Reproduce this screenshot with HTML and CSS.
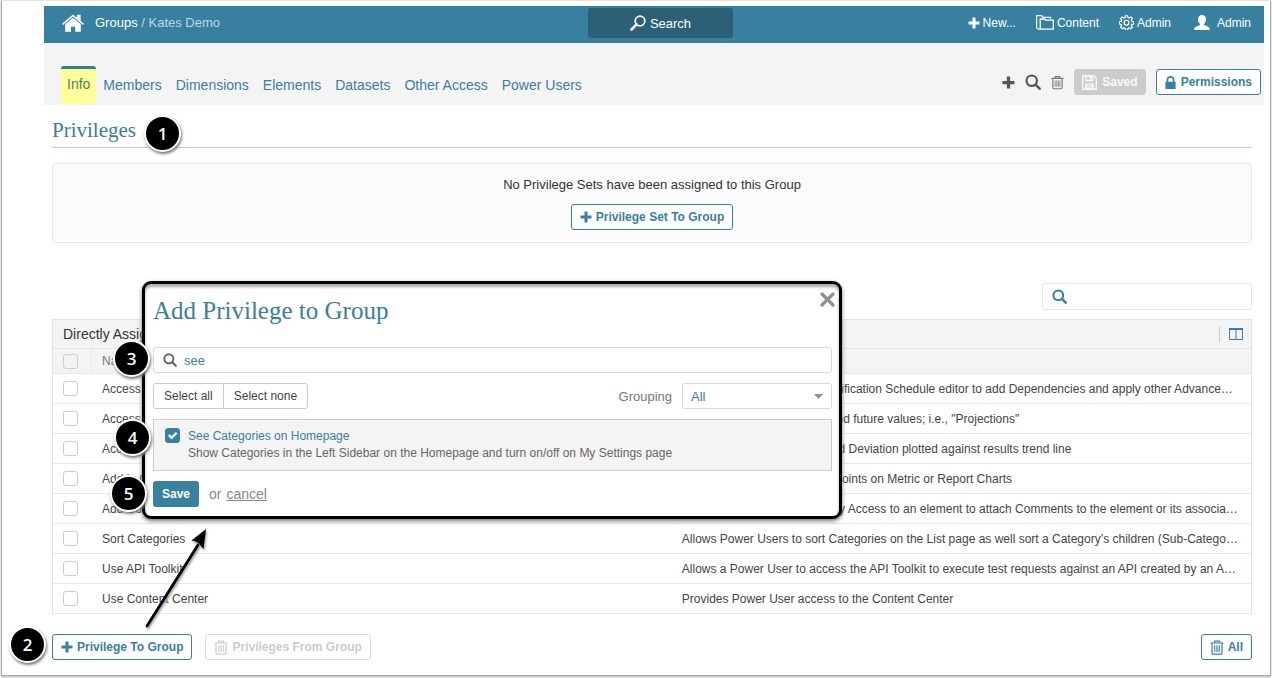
FILE: index.html
```
<!DOCTYPE html>
<html lang="en">
<head>
<meta charset="utf-8">
<title>Groups / Kates Demo</title>
<link rel="stylesheet" href="styles.css">
</head>
<body>
<svg class="sprite" aria-hidden="true">
  <symbol id="plus" viewBox="0 0 12 12"><path d="M4.5 0.5h3v4h4v3h-4v4h-3v-4h-4v-3h4z" fill="currentColor"/></symbol>
  <symbol id="search" viewBox="0 0 16 16"><circle cx="6.7" cy="6.7" r="5.2" fill="none" stroke="currentColor" stroke-width="2.2"/><path d="M10.6 10.6l4 4" stroke="currentColor" stroke-width="2.6" stroke-linecap="round"/></symbol>
  <symbol id="trash" viewBox="0 0 14 15"><path d="M0.5 3h13M4.5 3V1.2h5V3M2 3v10.2q0 1 1 1h8q1 0 1-1V3" fill="none" stroke="currentColor" stroke-width="1.2"/><path d="M4.4 5.3v6.8M6.200 5.3v6.8M7.900 5.3v6.8M9.600 5.3v6.8" stroke="currentColor" stroke-width="0.9"/></symbol>
</svg>
<div class="frame">
  <div class="app">
    <header class="topbar">
      <div class="crumbs">
        <a class="home" href="#" aria-label="Home"><svg width="22" height="18" viewBox="0 0 22 18"><path d="M0 9.8L11 0.4l4 3.4V0.8h3.6v6.1L22 9.8l-1 1.1-10-8.5-10 8.5z" fill="#fff"/><path d="M3.2 10.2L11 3.7l7.8 6.5V17.7h-5.6v-5H9v5H3.2z" fill="#fff"/></svg></a>
        <span><a class="crumb" href="#">Groups</a> / Kates Demo</span>
      </div>
      <button class="top-search" type="button"><svg width="16" height="16" viewBox="0 0 16 16"><circle cx="10" cy="6" r="4.8" fill="none" stroke="currentColor" stroke-width="1.7"/><path d="M6.5 9.5L1.5 14.5" stroke="currentColor" stroke-width="2.6" stroke-linecap="round"/></svg>Search</button>
      <nav class="topnav">
        <a href="#"><svg width="12" height="12"><use href="#plus"/></svg>New...</a>
        <a href="#"><svg width="18" height="15" viewBox="0 0 18 15"><path d="M3.800 14.2h-1.200l-2-1.400V.7h5l1.400 1.600h7.500V4" fill="none" stroke="currentColor" stroke-width="1.200"/><path d="M4.200 14.200V4h4.300l1.200 1.200h7.600v9z" fill="none" stroke="currentColor" stroke-width="1.300"/></svg>Content</a>
        <a href="#"><svg width="15" height="15" viewBox="0 0 16 16"><path d="M6.8 0.8h2.4l.4 1.9 1.4.6 1.6-1.1 1.7 1.7-1.1 1.6.6 1.4 1.9.3v2.4l-1.9.4-.6 1.4 1.1 1.6-1.7 1.7-1.6-1.1-1.4.6-.4 1.9H6.8l-.4-1.9-1.4-.6-1.6 1.1-1.7-1.7 1.1-1.6-.6-1.4-1.9-.4V7.2l1.9-.3.6-1.4L1.7 3.9l1.7-1.7L5 3.3l1.4-.6z" fill="none" stroke="currentColor" stroke-width="1.300"/><circle cx="8" cy="8.2" r="2.6" fill="none" stroke="currentColor" stroke-width="1.300"/></svg>Admin</a>
        <a class="user" href="#"><svg width="16" height="15" viewBox="0 0 16 15"><path d="M8 0c2.6 0 4 1.7 4 4.2 0 2-.8 3.6-1.9 4.5v1.2l4.6 2q1.1.6 1.2 3H.1q.1-2.4 1.2-3l4.6-2V8.700C4.800 7.800 4 6.200 4 4.200 4 1.700 5.400 0 8 0z" fill="currentColor"/></svg>Admin</a>
      </nav>
    </header>
    <div class="tabbar">
      <nav class="tabs">
        <a class="tab active" href="#">Info</a>
        <a class="tab" href="#">Members</a>
        <a class="tab" href="#">Dimensions</a>
        <a class="tab" href="#">Elements</a>
        <a class="tab" href="#">Datasets</a>
        <a class="tab" href="#">Other Access</a>
        <a class="tab" href="#">Power Users</a>
      </nav>
      <div class="tools">
        <button class="icon-btn" type="button" aria-label="Add"><svg width="13" height="13"><use href="#plus"/></svg></button>
        <button class="icon-btn" type="button" aria-label="Find"><svg width="16" height="16"><use href="#search"/></svg></button>
        <button class="icon-btn trash" type="button" aria-label="Delete"><svg width="13" height="15"><use href="#trash"/></svg></button>
        <button class="btn saved" type="button"><svg width="15" height="15" viewBox="0 0 15 15"><path d="M.7.7h11l2.600 2.600v11H.7z" fill="none" stroke="currentColor" stroke-width="1.400"/><path d="M4 1h6.500v4.500H4z" fill="none" stroke="currentColor" stroke-width="1.400"/><path d="M7.500 1.500h2v3h-2zM3 8.500h9v5.800H3z" fill="currentColor"/><path d="M4.500 10.300h6M4.500 12.300h6" stroke="#ccc" stroke-width=".8"/></svg>Saved</button>
        <button class="btn permissions" type="button"><svg width="11" height="13" viewBox="0 0 11 13"><path d="M.4 5.700h10.200V13H.4z" fill="currentColor"/><path d="M2.400 6V3.900C2.400 2 3.700.9 5.500.9s3.100 1.100 3.100 3V6" fill="none" stroke="currentColor" stroke-width="1.700"/></svg>Permissions</button>
      </div>
    </div>
    <main class="content">
      <h1 class="heading">Privileges <span class="badge badge-one">1</span></h1>
      <section class="empty-panel">
        <p class="empty-text">No Privilege Sets have been assigned to this Group</p>
        <button class="btn" type="button"><svg width="12" height="12"><use href="#plus"/></svg>Privilege Set To Group</button>
      </section>
      <div class="filter-row">
        <label class="filter"><svg width="15" height="15"><use href="#search"/></svg><input type="text" aria-label="Filter privileges"></label>
      </div>
      <section class="grid">
        <div class="grid-title">
          <span>Directly Assigned</span>
          <button class="columns" type="button" aria-label="Columns"><svg width="14" height="12" viewBox="0 0 14 12"><path d="M.5.5h13v11H.5zM7 1v10.500" fill="none" stroke="currentColor"/><path d="M0 0h14v2H0z" fill="currentColor"/></svg></button>
        </div>
        <table class="table">
          <thead><tr><th class="c-check"><input type="checkbox" class="check" aria-label="Select all rows"></th><th class="c-name">Name</th><th>Description</th></tr></thead>
          <tbody>
            <tr><td><input type="checkbox" class="check" aria-label="Row 1"></td><td>Access Advanced Notifications</td><td>Allows User access to the Notification Schedule editor to add Dependencies and apply other Advanced options</td></tr>
            <tr><td><input type="checkbox" class="check" aria-label="Row 2"></td><td>Access Projections</td><td>Allows User to view current and future values; i.e., "Projections"</td></tr>
            <tr><td><input type="checkbox" class="check" aria-label="Row 3"></td><td>Access Standard Deviation</td><td>Allows access to see Standard Deviation plotted against results trend line</td></tr>
            <tr><td><input type="checkbox" class="check" aria-label="Row 4"></td><td>Add in Comments</td><td>Allows adding Comments to Points on Metric or Report Charts</td></tr>
            <tr><td><input type="checkbox" class="check" aria-label="Row 5"></td><td>Add Comments</td><td>Provides Users with View Only Access to an element to attach Comments to the element or its associated items</td></tr>
            <tr><td><input type="checkbox" class="check" aria-label="Row 6"></td><td>Sort Categories</td><td>Allows Power Users to sort Categories on the List page as well sort a Category’s children (Sub-Categories)</td></tr>
            <tr><td><input type="checkbox" class="check" aria-label="Row 7"></td><td>Use API Toolkit</td><td>Allows a Power User to access the API Toolkit to execute test requests against an API created by an Admin</td></tr>
            <tr><td><input type="checkbox" class="check" aria-label="Row 8"></td><td>Use Content Center</td><td>Provides Power User access to the Content Center</td></tr>
          </tbody>
        </table>
      </section>
      <div class="actions">
        <span class="badge badge-two">2</span>
        <button class="btn" type="button"><svg width="12" height="12"><use href="#plus"/></svg>Privilege To Group</button>
        <button class="btn off" type="button" disabled><svg width="14" height="15"><use href="#trash"/></svg>Privileges From Group</button>
        <button class="btn all" type="button"><svg width="14" height="15"><use href="#trash"/></svg>All</button>
      </div>
    </main>
  </div>

  <section class="modal" role="dialog" aria-labelledby="modal-title">
    <button class="close" type="button" aria-label="Close"><svg width="15" height="15" viewBox="0 0 15 15"><path d="M2 2l11 11M13 2L2 13" stroke="currentColor" stroke-width="3.200" stroke-linecap="round"/></svg></button>
    <h2 class="modal-title" id="modal-title">Add Privilege to Group</h2>
    <label class="modal-search"><svg width="14" height="14"><use href="#search"/></svg><input type="text" value="see" aria-label="Search privileges"></label>
    <div class="modal-row">
      <div class="segmented"><button type="button">Select all</button><button type="button">Select none</button></div>
      <label class="grouping" for="grouping">Grouping</label>
      <span class="select-wrap"><select id="grouping"><option>All</option></select><svg width="9" height="5" viewBox="0 0 9 5"><path d="M0 0h9L4.500 5z" fill="#8f8f8f"/></svg></span>
    </div>
    <label class="option">
      <input type="checkbox" class="check" checked>
      <span><span class="option-name">See Categories on Homepage</span><span class="option-text">Show Categories in the Left Sidebar on the Homepage and turn on/off on My Settings page</span></span>
    </label>
    <div class="modal-actions"><button class="save" type="button">Save</button><span>or</span><a href="#">cancel</a></div>
    <span class="badge badge-three">3</span>
    <span class="badge badge-four">4</span>
    <span class="badge badge-five">5</span>
  </section>
  <svg class="arrow" width="70" height="106" viewBox="0 0 70 106" aria-hidden="true"><path d="M5 100L56 19" stroke="#000" stroke-width="2.800" stroke-linecap="round"/><path d="M64 3L49.500 14.500L54 15.500L57 17.500L61.500 23z" fill="#000"/></svg>
</div>
</body>
</html>
```
FILE: styles.css
```
* { box-sizing: border-box; }
body {
  margin: 0;
  background: #fff;
  color: #444;
  font-family: "Liberation Sans", Arial, sans-serif;
  font-size: 12px;
}
button, input, select { font: inherit; color: inherit; }
button { padding: 0; cursor: pointer; }
a { color: inherit; text-decoration: none; }
svg { display: block; flex: none; }
.sprite { position: absolute; width: 0; height: 0; }

.frame {
  position: relative;
  margin: 0 1px 2px;
  padding: 5px 6px 15px 42px;
  border: 1px solid #aaa;
  border-top-color: #e4e4e4;
  box-shadow: 0 1px 2px #aaa;
}

.topbar {
  display: grid;
  grid-template-columns: 526fr 145px 518fr;
  align-items: center;
  height: 37px;
  padding: 0 13px 0 18px;
  background: #37809f;
  color: #fff;
}
.crumbs { display: flex; gap: 11px; padding-bottom: 4px; align-items: center; font-size: 13px; color: #bcd9e6; }
.crumb { color: #fff; }
.top-search {
  display: flex;
  align-items: center;
  justify-content: center;
  gap: 4px;
  height: 30px;
  margin-bottom: 3px;
  border: 0;
  border-radius: 3px;
  background: #2b6077;
  font-size: 13px;
}
.topnav { display: flex; justify-content: flex-end; gap: 20px; padding-bottom: 4px; }
.topnav a { display: flex; align-items: center; gap: 3px; }
.topnav .user { gap: 7px; margin-left: 3px; }

.tabbar {
  display: flex;
  align-items: flex-end;
  justify-content: space-between;
  height: 62px;
  padding: 0 3px 0 17px;
  background: #f4f4f4;
}
.tabs { display: flex; font-size: 14px; color: #37809f; }
.tab { height: 39px; padding: 0 7px; border-top: 3px solid transparent; line-height: 32px; }
.tab.active { margin-bottom: 1px; height: 38px; padding: 0 6px; border-top-color: #2f8088; border-radius: 3px 3px 0 0; background: #ff9; color: #4b8560; line-height: 31px; }
.tools { display: flex; align-items: center; gap: 10px; padding-bottom: 10px; }
.icon-btn { border: 0; background: none; color: #555; }
.icon-btn.trash { color: #777; }

.btn {
  display: flex;
  align-items: center;
  gap: 4px;
  height: 26px;
  padding: 0 8px;
  border: 1px solid #37809f;
  border-radius: 3px;
  background: #fff;
  color: #37809f;
  font-weight: bold;
}
.btn.saved { gap: 5px; padding: 0 7px; border-color: #ccc; background: #ccc; color: #f8f8f8; }
.btn.permissions { gap: 5px; padding: 0 8px; }
.btn.off { border-color: #ddd; color: #ccc; }

.content { padding: 9px 12px 0 8px; }
.heading {
  display: flex;
  align-items: center;
  gap: 8px;
  height: 34px;
  margin: 0 0 15px;
  border-bottom: 1px solid #b9d0dc;
  color: #37809f;
  font: 21px "Liberation Serif", serif;
}
.badge {
  position: relative;
  display: flex;
  align-items: center;
  justify-content: center;
  width: 37px;
  height: 37px;
  border: 2px solid #fff;
  border-radius: 50%;
  background: #000;
  color: #fff;
  font: 600 17px "Open Sans", sans-serif;
  box-shadow: 1px 2px 3px #777;
}
.badge-one { margin-top: 6px; }
.empty-panel {
  display: flex;
  flex-direction: column;
  align-items: center;
  gap: 11px;
  padding: 13px 0 12px;
  border: 1px solid #e6e6e6;
  border-radius: 4px;
  background: #fbfbfb;
}
.empty-text { margin: 0; font-size: 13px; line-height: 16px; color: #333; }
.filter-row { display: flex; justify-content: flex-end; margin: 40px 0 9px; }
.filter { display: flex; align-items: center; gap: 6px; width: 210px; height: 27px; padding: 0 9px; border: 1px solid #e6e6e6; border-radius: 3px; color: #37809f; }
.filter input, .modal-search input { flex: 1; min-width: 0; padding: 0; border: 0; outline: 0; background: none; }

.grid { border: 1px solid #e4e4e4; border-bottom: 0; }
.grid-title {
  display: flex;
  align-items: center;
  justify-content: space-between;
  height: 29px;
  padding: 0 8px 0 10px;
  border-bottom: 1px solid #e4e4e4;
  background: #f4f4f4;
  color: #333;
  font-size: 14px;
}
.columns { padding: 2px 0 2px 9px; border: 0; border-left: 1px solid #ccc; background: none; color: #37809f; }
.table { width: 100%; table-layout: fixed; border-collapse: separate; border-spacing: 0; }
.table th, .table td {
  height: 30px;
  padding: 0 13px 0 10px;
  border-bottom: 1px solid #e8e8e8;
  overflow: hidden;
  text-align: left;
  text-overflow: ellipsis;
  white-space: nowrap;
  font-weight: normal;
}
.table th { height: 25px; background: #f4f4f4; color: #777; }
.table .c-check { width: 39px; border-right: 1px solid #e8e8e8; }
.table .c-name { width: 48.4%; }
.check {
  display: block;
  appearance: none;
  width: 15px;
  height: 15px;
  margin: 0;
  border: 1px solid #ccc;
  border-radius: 3px;
}
.check:checked {
  border-color: #37809f;
  background: #37809f;
}
.actions { position: relative; display: flex; gap: 13px; padding-top: 20px; }
.all { margin-left: auto; }
.badge-two { position: absolute; left: -43px; top: 12px; }

.modal {
  position: absolute;
  left: 140px;
  top: 280px;
  width: 700px;
  padding: 10px 7px 9px 8px;
  border: 3px solid #000;
  border-radius: 9px;
  background: #fff;
  box-shadow: 0 2px 4px #777, inset 0 3px 3px #aaa;
}
.close { position: absolute; right: 4px; top: 8px; border: 0; background: none; color: #8f8f8f; }
.modal-title { margin: 0 0 19px; color: #37809f; font: 25px/34px "Liberation Serif", serif; }
.modal-search { display: flex; align-items: center; gap: 7px; height: 26px; padding: 0 9px; border: 1px solid #d8d8d8; border-radius: 3px; color: #666; }
.modal-search input { color: #37809f; font-size: 13px; }
.modal-row { display: flex; align-items: center; margin: 10px 0; font-size: 13px; color: #777; }
.segmented { display: flex; margin-right: auto; font-size: 12px; color: #444; }
.segmented button { height: 26px; padding: 0 10px; border: 1px solid #ccc; border-radius: 3px 0 0 3px; background: #fff; }
.segmented button + button { margin-left: -1px; border-radius: 0 3px 3px 0; }
.grouping { margin-right: 10px; }
.select-wrap { display: grid; align-items: center; width: 150px; color: #37809f; }
.select-wrap select { grid-area: 1 / 1; height: 26px; padding: 0 8px; appearance: none; border: 1px solid #d8d8d8; border-radius: 3px; background: #fff; }
.select-wrap svg { grid-area: 1 / 1; justify-self: end; margin-right: 9px; }
.option { display: flex; gap: 8px; padding: 8px 11px; border: 1px solid #ccc; background: #f4f4f4; color: #666; line-height: 17px; }
.option-name, .option-text { display: block; }
.option-name { color: #37809f; }
.option .check { flex: none; background: #37809f url("data:image/svg+xml,%3Csvg xmlns='http://www.w3.org/2000/svg' viewBox='0 0 14 14'%3E%3Cpath d='M3 6.500l3 3 5.500-5.500' fill='none' stroke='white' stroke-width='2.400'/%3E%3C/svg%3E"); }
.modal-actions { display: flex; align-items: center; gap: 10px; margin-top: 10px; font-size: 14px; color: #888; }
.modal-actions a { margin-left: -5px; text-decoration: underline; }
.save { width: 46px; height: 26px; border: 0; border-radius: 3px; background: #37809f; color: #fff; font-size: 12px; font-weight: bold; }
.badge-three { position: absolute; left: -32px; top: 56px; }
.badge-four { position: absolute; left: -31px; top: 135px; }
.badge-five { position: absolute; left: -35px; top: 191px; }
.arrow { position: absolute; left: 140px; top: 525px; filter: drop-shadow(1px 2px 1px #999); }
```
